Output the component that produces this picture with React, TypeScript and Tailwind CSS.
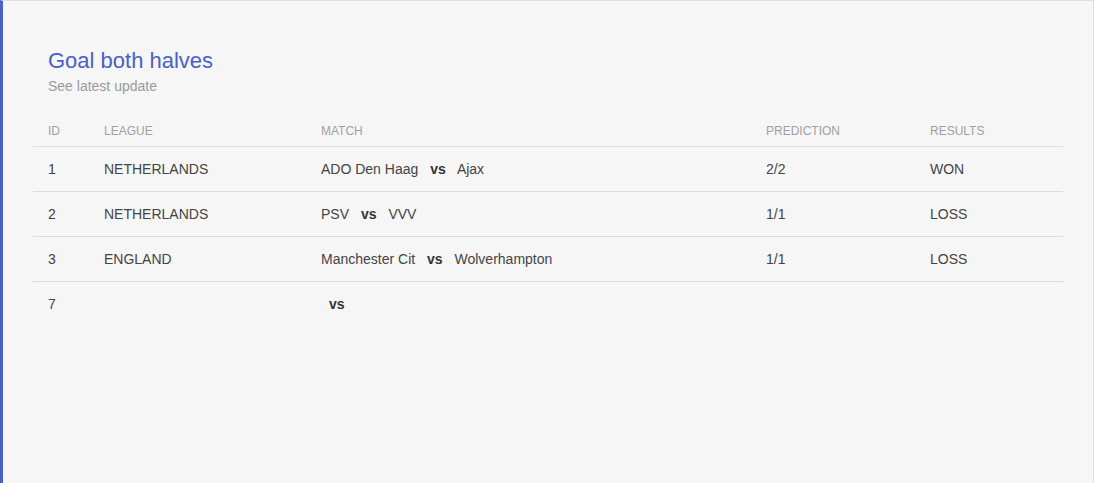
const rows = [
  { id: 1, league: 'NETHERLANDS', home: 'ADO Den Haag', away: 'Ajax', prediction: '2/2', result: 'WON' },
  { id: 2, league: 'NETHERLANDS', home: 'PSV', away: 'VVV', prediction: '1/1', result: 'LOSS' },
  { id: 3, league: 'ENGLAND', home: 'Manchester Cit', away: 'Wolverhampton', prediction: '1/1', result: 'LOSS' },
  { id: 7, league: '', home: '', away: '', prediction: '', result: '' },
]

const cols = 'grid grid-cols-[56px_217px_445px_164px_1fr]'

const App = () => {
  return (
    <div className="h-[483px] w-full bg-[#f6f6f6] border-l-[3px] border-l-[#4a60c9] border-t border-t-[#e0e0e0] border-r border-r-[#e0e0e0] font-['Liberation_Sans',Arial,sans-serif]">
      <div className="px-[30px] pt-[45px]">
        <div className="pl-[15px]">
          <h1 className="text-[22px] leading-[30px] text-[#4a60c9]">Goal both halves</h1>
          <p className="text-[14px] leading-[20px] text-[#9a9a9a]">See latest update</p>
        </div>

        <div className="mt-[20px]">
          <div className={`${cols} h-[31px] items-center border-b border-[#dcdcdc] text-[12px] text-[#a0a0a0]`}>
            <div className="pl-[15px]">ID</div>
            <div className="pl-[15px]">LEAGUE</div>
            <div className="pl-[15px]">MATCH</div>
            <div className="pl-[15px]">PREDICTION</div>
            <div className="pl-[15px]">RESULTS</div>
          </div>
          {rows.map((row, i) => (
            <div
              key={row.id}
              className={`${cols} h-[45px] items-center text-[14px] text-[#444] ${i < rows.length - 1 ? 'border-b border-[#dcdcdc]' : ''}`}
            >
              <div className="pl-[15px]">{row.id}</div>
              <div className="pl-[15px]">{row.league}</div>
              <div className="pl-[15px]">
                {row.home} <b className="mx-2 font-bold text-[#333]">vs</b> {row.away}
              </div>
              <div className="pl-[15px]">{row.prediction}</div>
              <div className="pl-[15px]">{row.result}</div>
            </div>
          ))}
        </div>
      </div>
    </div>
  )
}

export default App
